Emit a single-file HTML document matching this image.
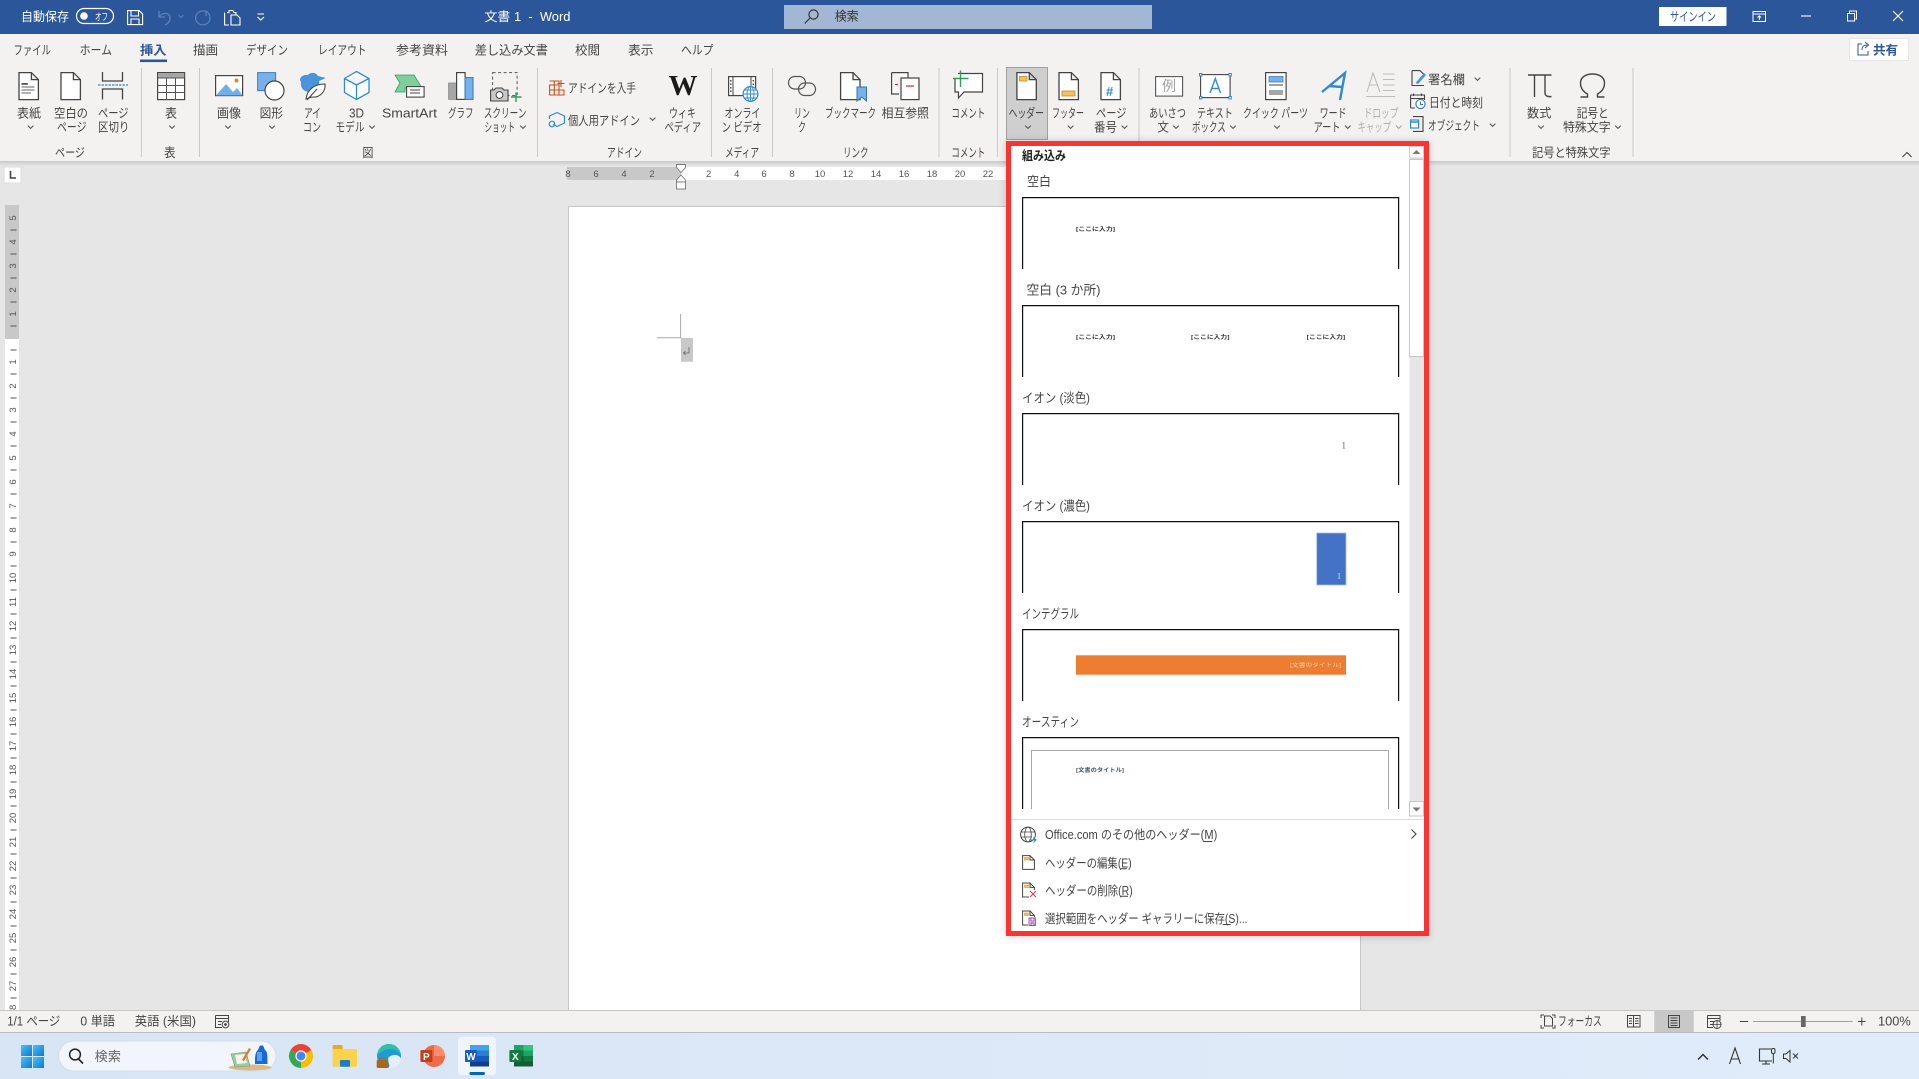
<!DOCTYPE html>
<html lang="ja"><head><meta charset="utf-8"><title>文書 1 - Word</title>
<style>
html,body{margin:0;padding:0;width:1919px;height:1079px;overflow:hidden;background:#e6e6e6}
svg{display:block;position:absolute;left:0;top:0}
text{font-family:"Liberation Sans","Noto Sans CJK JP",sans-serif;font-size:12.5px;fill:#444;white-space:pre}
.w{fill:#fff}.g{fill:#b0b0b0}
.r text,text.r{font-size:9.5px;fill:#555}
.p text{font-size:5.5px;fill:#333;font-weight:700}
.s{fill:none;stroke:#444;stroke-width:1.3}
.c{fill:none;stroke:#555;stroke-width:1.1}
.m{font-size:13px;fill:#454545}
</style></head><body>
<svg width="1919" height="1079" viewBox="0 0 1919 1079" xmlns="http://www.w3.org/2000/svg">
<defs>
<path id="ch" d="M-2.8,-1.4 L0,1.4 L2.8,-1.4" fill="none" stroke="#555" stroke-width="1.1"/>
<path id="doc" d="M.6,.6 H13 L20,7.6 V27.6 H.6 Z M13,.6 V7.6 H20" fill="#fff" stroke="#444" stroke-width="1.3"/>
<linearGradient id="tb" x1="0" x2="1" y1="0" y2="0"><stop offset="0" stop-color="#d7e5f5"/><stop offset=".3" stop-color="#dbe7f7"/><stop offset="1" stop-color="#e0ecfa"/></linearGradient>
<linearGradient id="sh" x1="0" x2="0" y1="0" y2="1"><stop offset="0" stop-color="#c9c9c9"/><stop offset="1" stop-color="#e6e6e6"/></linearGradient>
<linearGradient id="win" x1="0" x2="1" y1="0" y2="1"><stop offset="0" stop-color="#4cc2f4"/><stop offset="1" stop-color="#0a78d4"/></linearGradient>
<filter id="bl" x="-10%" y="-10%" width="120%" height="120%"><feGaussianBlur stdDeviation="4"/></filter>
</defs>

<!-- backgrounds -->
<rect width="1919" height="1079" fill="#e6e6e6"/>
<rect width="1919" height="34" fill="#2b579a"/>
<rect y="34" width="1919" height="127" fill="#f3f2f1"/>
<rect y="161" width="1919" height="5" fill="url(#sh)"/>

<!-- title bar -->
<text class="w" x="21" y="21" textLength="48" lengthAdjust="spacingAndGlyphs">自動保存</text>
<rect x="76.5" y="8.5" width="37" height="15" rx="7.5" fill="none" stroke="#fff" stroke-width="1.2"/>
<circle cx="84" cy="16" r="3.8" fill="#fff"/>
<text class="w" x="95" y="20.5" style="font-size:10px" textLength="13" lengthAdjust="spacingAndGlyphs">オフ</text>
<path d="M127.6,10.6 H139 L142.6,14 V24.6 H127.6 Z M131,10.6 V16 H138.5 V10.6 M131,24.6 V19 H139 V24.6" fill="none" stroke="#fff" stroke-width="1.1"/>
<path d="M159,11 V17 H165 M159,17 C163,11 171,13 170,19 C169.5,22 167,24 165,25" fill="none" stroke="#5f80b5" stroke-width="1.3"/>
<path d="M178.5,15 L181,17.5 L183.5,15" fill="none" stroke="#5f80b5" stroke-width="1"/>
<path d="M202,11 C196,12 194,18 197,22 C201,27 210,25 210,18 C210,15 208,12 206,11 M206,11 V16 M206,11 H201" fill="none" stroke="#5f80b5" stroke-width="1.3"/>
<path d="M227,12.6 H229 V10.5 H233 L234,12.6 H236 V15 M224.6,12.6 V25 H229 M231,15 V25 H240 V18 L237,15 Z" fill="none" stroke="#fff" stroke-width="1.1"/>
<path d="M257.5,14 H264 M257.5,17 L260.7,20 L264,17" fill="none" stroke="#fff" stroke-width="1.1"/>
<text class="w" x="484.5" y="21" textLength="86" lengthAdjust="spacingAndGlyphs">文書 1  -  Word</text>
<rect x="784" y="5" width="368" height="24" fill="#a3b7d4"/>
<circle cx="813.5" cy="14.5" r="4.6" fill="none" stroke="#333" stroke-width="1.2"/><path d="M810,18 L804.8,23.5" stroke="#333" stroke-width="1.2"/>
<text x="834.7" y="20.5" style="fill:#333" textLength="24" lengthAdjust="spacingAndGlyphs">検索</text>
<rect x="1659" y="7" width="67.5" height="19" fill="#fff"/>
<text x="1670" y="21" style="fill:#2b579a" textLength="46" lengthAdjust="spacingAndGlyphs">サインイン</text>
<path d="M1753,11.5 H1765.5 V21.5 H1753 Z M1753,14 H1765.5 M1759.3,20 V16 M1757.5,17.5 L1759.3,15.8 L1761,17.5" fill="none" stroke="#fff" stroke-width="1"/>
<path d="M1801,16 H1811" stroke="#fff" stroke-width="1.1"/>
<path d="M1847.5,13.5 H1854.5 V21 H1847.5 Z M1849.5,13 V11 H1856.5 V19 H1855" fill="none" stroke="#fff" stroke-width="1"/>
<path d="M1893,11 L1903,21 M1903,11 L1893,21" stroke="#fff" stroke-width="1.1"/>

<!-- tabs -->
<text x="13.5" y="54.3" textLength="37.5" lengthAdjust="spacingAndGlyphs">ファイル</text>
<text x="79.6" y="54.3" textLength="32.5" lengthAdjust="spacingAndGlyphs">ホーム</text>
<text x="140" y="54.3" style="fill:#2b579a;font-weight:700" textLength="26.5" lengthAdjust="spacingAndGlyphs">挿入</text>
<rect x="140" y="59.5" width="27" height="2.6" fill="#2b579a"/>
<text x="193" y="54.3" textLength="25" lengthAdjust="spacingAndGlyphs">描画</text>
<text x="246" y="54.3" textLength="42" lengthAdjust="spacingAndGlyphs">デザイン</text>
<text x="318" y="54.3" textLength="48.5" lengthAdjust="spacingAndGlyphs">レイアウト</text>
<text x="396" y="54.3" textLength="52" lengthAdjust="spacingAndGlyphs">参考資料</text>
<text x="474.7" y="54.3" textLength="73.3" lengthAdjust="spacingAndGlyphs">差し込み文書</text>
<text x="575" y="54.3" textLength="25" lengthAdjust="spacingAndGlyphs">校閲</text>
<text x="628" y="54.3" textLength="25.5" lengthAdjust="spacingAndGlyphs">表示</text>
<text x="681" y="54.3" textLength="32.5" lengthAdjust="spacingAndGlyphs">ヘルプ</text>
<rect x="1849.5" y="38.5" width="59" height="22" rx="1" fill="#fff" stroke="#e5e5e5"/>
<path d="M1862,44 H1858 V55 H1868 V51 M1862,50 C1862,46 1864,45 1867,45 M1865,42 L1868.5,45 L1865,48" fill="none" stroke="#2b579a" stroke-width="1"/>
<text x="1873" y="54.5" style="fill:#2b579a;font-weight:700;font-size:12.5px" textLength="25" lengthAdjust="spacingAndGlyphs">共有</text>

<!-- separators -->
<path d="M141.5,68 V157 M199.5,68 V157 M537.5,68 V157 M711.5,68 V157 M772.5,68 V157 M939,68 V157 M997.5,68 V157 M1139,68 V157 M1510,68 V157 M1633,68 V157" stroke="#c8c8c8" stroke-width="1"/>

<!-- ribbon: page group -->
<use href="#doc" x="18.4" y="72"/>
<path d="M21.5,84 H28 M21.5,87 H34.5 M21.5,90 H34.5 M21.5,93 H31" stroke="#666" stroke-width="1"/>
<rect x="21.5" y="83" width="6" height="1.8" fill="#555"/>
<use href="#doc" x="60.4" y="72"/>
<path d="M102.5,72 V81 H122.5 V72 M102.5,99.5 V89 H122.5 V99.5" fill="none" stroke="#444" stroke-width="1.3"/>
<path d="M98,85 H128" stroke="#2e8bd1" stroke-width="1.2" stroke-dasharray="2.5 1"/>
<text x="17" y="117.5" textLength="24" lengthAdjust="spacingAndGlyphs">表紙</text><use href="#ch" x="30.6" y="127"/>
<text x="54" y="117.5" textLength="34" lengthAdjust="spacingAndGlyphs">空白の</text>
<text x="57" y="131.5" textLength="29.5" lengthAdjust="spacingAndGlyphs">ページ</text>
<text x="98" y="117.5" textLength="30.5" lengthAdjust="spacingAndGlyphs">ページ</text>
<text x="98" y="131.5" textLength="31.4" lengthAdjust="spacingAndGlyphs">区切り</text>
<text x="55" y="157" textLength="30" lengthAdjust="spacingAndGlyphs">ページ</text>
<!-- table -->
<rect x="157.6" y="72.6" width="27" height="27" fill="#fff" stroke="#444" stroke-width="1.2"/>
<rect x="158" y="73" width="26.2" height="5" fill="#a6a6a6"/>
<path d="M157.6,78 H184.6 M157.6,85.5 H184.6 M157.6,92.5 H184.6 M166.5,78 V99.6 M175.5,78 V99.6" stroke="#555" stroke-width="1" fill="none"/>
<text x="165" y="117.5" textLength="12" lengthAdjust="spacingAndGlyphs">表</text><use href="#ch" x="172" y="127"/>
<text x="164" y="157" textLength="11.5" lengthAdjust="spacingAndGlyphs">表</text>
<!-- pictures -->
<rect x="215.6" y="75.6" width="27" height="20" fill="#fff" stroke="#444" stroke-width="1.2"/>
<path d="M216,95.5 L226,84 L233,92 L237,88 L242.5,95.5 Z" fill="#6db0ea"/>
<circle cx="236.5" cy="80.5" r="2" fill="#d58a32"/>
<rect x="257.6" y="72.6" width="18" height="18" fill="#78b1ea" stroke="#3e7cc0" stroke-width="1"/>
<circle cx="274.5" cy="90.5" r="9.5" fill="#fff" stroke="#444" stroke-width="1.2"/>
<path d="M301,82 C298,78 303,74 308,75 C310,72 316,72 318,76 L326,78 L319,81 C320,85 318,88 314,89 L310,92 C304,92 300,88 301,82 Z" fill="#4a94dc"/>
<path d="M306,99 C307,90 314,84 325,84 C326,92 319,98 312,97 Z M307,100 L317,89" fill="#fff" stroke="#444" stroke-width="1.1"/>
<path d="M356.5,71.5 L369,78.5 V92.5 L356.5,99.5 L344.5,92.5 V78.5 Z M344.5,78.5 L356.5,85 L369,78.5 M356.5,85 V99.5" fill="#fff" stroke="#2e8bd1" stroke-width="1.3"/>
<path d="M395,75 H414 L422,88 H405 V92 H395 L400,83 Z" fill="#7fd09c" stroke="#2f9e58" stroke-width=".8"/>
<rect x="406.6" y="86.6" width="17.5" height="10.5" fill="#fff" stroke="#444" stroke-width="1.1"/>
<path d="M410,90 H420 M410,93 H420" stroke="#444" stroke-width=".9"/>
<rect x="448.6" y="83" width="8" height="16.4" fill="#a6a6a6" stroke="#8a8a8a" stroke-width=".8"/>
<rect x="456.6" y="72.6" width="8.5" height="26.8" fill="#fff" stroke="#444" stroke-width="1.2"/>
<rect x="465" y="77.6" width="8" height="21.8" fill="#78b1ea" stroke="#2e75b6" stroke-width="1"/>
<rect x="492.6" y="72.6" width="24.5" height="23" fill="none" stroke="#555" stroke-width="1" stroke-dasharray="3 2.5"/>
<path d="M490.6,90 H494 L496,88 H502 L504,90 H508 V101 H490.6 Z" fill="#c9c9c9" stroke="#444" stroke-width="1.1"/>
<circle cx="499.5" cy="95" r="3.4" fill="#fff" stroke="#444"/>
<path d="M516,92.5 V102 M511,97 H521.5" stroke="#2f9e58" stroke-width="1.4"/>
<text x="217" y="117.5" textLength="24" lengthAdjust="spacingAndGlyphs">画像</text><use href="#ch" x="228" y="127"/>
<text x="259.6" y="117.5" textLength="23.4" lengthAdjust="spacingAndGlyphs">図形</text><use href="#ch" x="272" y="127"/>
<text x="304" y="117.5" textLength="17" lengthAdjust="spacingAndGlyphs">アイ</text>
<text x="303" y="131.5" textLength="18" lengthAdjust="spacingAndGlyphs">コン</text>
<text x="349" y="117.5" textLength="15" lengthAdjust="spacingAndGlyphs">3D</text>
<text x="335.5" y="131.5" textLength="29" lengthAdjust="spacingAndGlyphs">モデル</text><use href="#ch" x="372" y="127"/>
<text x="382" y="117.5" textLength="55" lengthAdjust="spacingAndGlyphs">SmartArt</text>
<text x="448" y="117.5" textLength="25.5" lengthAdjust="spacingAndGlyphs">グラフ</text>
<text x="483.7" y="117.5" textLength="42.8" lengthAdjust="spacingAndGlyphs">スクリーン</text>
<text x="484.5" y="131.5" textLength="30.5" lengthAdjust="spacingAndGlyphs">ショット</text><use href="#ch" x="523" y="127"/>
<text x="362.4" y="157" textLength="11.1" lengthAdjust="spacingAndGlyphs">図</text>
<!-- add-ins -->
<path d="M549.6,85 H559 V95 H549.6 Z M549.6,90 H564 V95 H559 M554.3,81 V95 M549.6,81 H559 V85 M561,80 V87 M557.5,83.5 H564.5" fill="none" stroke="#c8501f" stroke-width="1.1"/>
<path d="M557,112.5 L564.5,116 V123 L557,126.5 L553,124.5 M549.5,119 V116 L557,112.5" fill="none" stroke="#2e8bd1" stroke-width="1.2"/><circle cx="552" cy="124" r="2.8" fill="none" stroke="#2e8bd1" stroke-width="1.2"/>
<text x="568" y="92.5" textLength="68" lengthAdjust="spacingAndGlyphs">アドインを入手</text>
<text x="568" y="125" textLength="72" lengthAdjust="spacingAndGlyphs">個人用アドイン</text><use href="#ch" x="652.6" y="119"/>
<text x="607" y="157" textLength="35" lengthAdjust="spacingAndGlyphs">アドイン</text>
<text x="668.5" y="95" style="font-family:'Liberation Serif',serif;font-size:28px;font-weight:700;fill:#1a1a1a" textLength="29" lengthAdjust="spacingAndGlyphs">W</text>
<text x="669" y="117.5" textLength="27" lengthAdjust="spacingAndGlyphs">ウィキ</text>
<text x="664.5" y="131.5" textLength="36.5" lengthAdjust="spacingAndGlyphs">ペディア</text>
<!-- media -->
<rect x="728.6" y="76.6" width="27" height="19" fill="#fff" stroke="#444" stroke-width="1.2"/>
<path d="M733,76.6 V95.6 M751,76.6 V95.6" stroke="#444"/>
<path d="M730.8,80 V94 M753.3,80 V88" stroke="#444" stroke-width="1.4" stroke-dasharray="1.5 2"/>
<circle cx="750.5" cy="94" r="7.4" fill="#fff" stroke="#2e8bd1" stroke-width="1.2"/>
<path d="M743,94 H758 M750.5,86.6 V101.4 M744.5,90 H756.5 M744.5,98 H756.5" stroke="#2e8bd1" stroke-width=".9" fill="none"/><ellipse cx="750.5" cy="94" rx="3.5" ry="7.4" fill="none" stroke="#2e8bd1" stroke-width=".9"/>
<text x="724.5" y="117.5" textLength="35.9" lengthAdjust="spacingAndGlyphs">オンライ</text>
<text x="721.6" y="131.5" textLength="40" lengthAdjust="spacingAndGlyphs">ン ビデオ</text>
<text x="725" y="157" textLength="34" lengthAdjust="spacingAndGlyphs">メディア</text>
<!-- links -->
<rect x="788.5" y="76.5" width="17" height="12.5" rx="6.2" fill="none" stroke="#555" stroke-width="1.2"/>
<rect x="798.5" y="83" width="17" height="12.5" rx="6.2" fill="none" stroke="#555" stroke-width="1.2"/>
<use href="#doc" x="840" y="72"/>
<path d="M857,87 H866.5 V101 L861.7,97 L857,101 Z" fill="#78b1ea" stroke="#2e75b6"/>
<path d="M891.6,72.6 H908 V78 M891.6,72.6 V94 H899" fill="#fff" stroke="#444" stroke-width="1.2"/>
<rect x="901" y="78" width="18" height="21.6" fill="#fff" stroke="#444" stroke-width="1.2"/>
<path d="M895,84.5 H898 M906,86 H914" stroke="#d13438" stroke-width="1.2"/>
<text x="794" y="117.5" textLength="16" lengthAdjust="spacingAndGlyphs">リン</text>
<text x="798" y="131.5" textLength="8" lengthAdjust="spacingAndGlyphs">ク</text>
<text x="825" y="117.5" textLength="51" lengthAdjust="spacingAndGlyphs">ブックマーク</text>
<text x="881.6" y="117.5" textLength="47.4" lengthAdjust="spacingAndGlyphs">相互参照</text>
<text x="843" y="157" textLength="25.6" lengthAdjust="spacingAndGlyphs">リンク</text>
<!-- comment -->
<path d="M958,73.5 H982.5 V92 H964 L958.5,98 V92 H955 V79" fill="#fff" stroke="#444" stroke-width="1.2"/>
<path d="M960.5,70.5 V87 M953,78.5 H968.5" stroke="#2f9e58" stroke-width="1.4"/>
<text x="951.4" y="117.5" textLength="33.9" lengthAdjust="spacingAndGlyphs">コメント</text>
<text x="951.4" y="157" textLength="33.9" lengthAdjust="spacingAndGlyphs">コメント</text>
<!-- header/footer -->
<rect x="1006.5" y="67.5" width="41" height="72" fill="#cfcfcf" stroke="#a0a0a0"/>
<use href="#doc" x="1016.3" y="72"/>
<rect x="1019.5" y="76.5" width="7.5" height="4.5" fill="#f6c05c" stroke="#c98a1c" stroke-width=".8"/>
<use href="#doc" x="1058.4" y="72"/>
<rect x="1062" y="91" width="13" height="5" fill="#f6c05c" stroke="#c98a1c" stroke-width=".8"/>
<use href="#doc" x="1100.4" y="72"/>
<text x="1106" y="96" style="font-size:13px;fill:#2e8bd1;font-weight:700">#</text>
<text x="1008.6" y="117.5" textLength="35.4" lengthAdjust="spacingAndGlyphs">ヘッダー</text><use href="#ch" x="1028" y="127"/>
<text x="1052" y="117.5" textLength="32" lengthAdjust="spacingAndGlyphs">フッター</text><use href="#ch" x="1070.6" y="127"/>
<text x="1096" y="117.5" textLength="30.5" lengthAdjust="spacingAndGlyphs">ページ</text>
<text x="1094" y="131.5" textLength="23" lengthAdjust="spacingAndGlyphs">番号</text><use href="#ch" x="1124.5" y="127"/>
<!-- text group -->
<rect x="1155.6" y="76.6" width="27" height="19.5" fill="#fff" stroke="#555" stroke-width="1.1"/>
<text x="1162" y="91" style="font-size:14px;fill:#a0a0a0">例</text>
<rect x="1200.6" y="74.6" width="29.5" height="23" fill="#fff" stroke="#444" stroke-width="1.1"/>
<path d="M1199.5,73.5 h2.4 v2.4 h-2.4 Z M1228.9,73.5 h2.4 v2.4 h-2.4 Z M1199.5,96.5 h2.4 v2.4 h-2.4 Z M1228.9,96.5 h2.4 v2.4 h-2.4 Z" fill="#fff" stroke="#2e8bd1"/>
<path d="M1210,93 L1215.3,78.5 L1220.5,93 M1212,88.5 H1218.5" fill="none" stroke="#2e8bd1" stroke-width="1.4"/>
<rect x="1265.6" y="72.6" width="20.5" height="27" fill="#fff" stroke="#444" stroke-width="1.2"/>
<rect x="1269" y="76.5" width="14" height="5.5" fill="#78b1ea" stroke="#2e75b6" stroke-width=".7"/>
<path d="M1269,85 H1283" stroke="#444" stroke-width="1"/>
<rect x="1269" y="90" width="14" height="5" fill="#a6a6a6"/>
<path d="M1322,92 L1345,73 L1340,100 M1329,86 L1342,87" fill="none" stroke="#2e8bd1" stroke-width="2.4"/>
<path d="M1367,92 L1373,73 L1380,92 M1369.5,85 H1377.5 M1383,74 H1394.5 M1383,79.5 H1394.5 M1383,85 H1394.5 M1383,90.5 H1394.5 M1366,96.5 H1395" fill="none" stroke="#bcbcbc" stroke-width="1.1"/>
<text x="1149" y="117.5" textLength="37" lengthAdjust="spacingAndGlyphs">あいさつ</text>
<text x="1157.5" y="131.5" textLength="11.5" lengthAdjust="spacingAndGlyphs">文</text><use href="#ch" x="1176" y="127"/>
<text x="1197" y="117.5" textLength="35.7" lengthAdjust="spacingAndGlyphs">テキスト</text>
<text x="1192" y="131.5" textLength="33.7" lengthAdjust="spacingAndGlyphs">ボックス</text><use href="#ch" x="1233" y="127"/>
<text x="1243" y="117.5" textLength="65" lengthAdjust="spacingAndGlyphs">クイック パーツ</text><use href="#ch" x="1277" y="127"/>
<text x="1319.6" y="117.5" textLength="27" lengthAdjust="spacingAndGlyphs">ワード</text>
<text x="1313.5" y="131.5" textLength="27" lengthAdjust="spacingAndGlyphs">アート</text><use href="#ch" x="1347.8" y="127"/>
<text class="g" x="1363.7" y="117.5" textLength="34.7" lengthAdjust="spacingAndGlyphs">ドロップ</text>
<text class="g" x="1357.5" y="131.5" textLength="33.5" lengthAdjust="spacingAndGlyphs">キャップ</text><use href="#ch" x="1398.8" y="127" opacity=".5"/>
<path d="M1412,70.6 H1420 L1424,74.5 V77 M1412,70.6 V85.5 H1424" fill="none" stroke="#444" stroke-width="1.1"/>
<path d="M1415.5,83 L1424,73 L1426,75 L1418,84 Z" fill="#4a94dc"/>
<text x="1428" y="84" textLength="37" lengthAdjust="spacingAndGlyphs">署名欄</text><use href="#ch" x="1477.5" y="79"/>
<path d="M1410.6,108 V95 H1424.5 V100 M1410.6,98.5 H1424.5 M1413.5,93.5 V96 M1421.5,93.5 V96 M1410.6,108 H1415" fill="none" stroke="#444" stroke-width="1.1"/>
<circle cx="1420.5" cy="104" r="4.6" fill="#fff" stroke="#2e75b6" stroke-width="1.1"/><path d="M1420.5,101.5 V104.5 H1423" fill="none" stroke="#2e75b6"/>
<text x="1429" y="107" textLength="54" lengthAdjust="spacingAndGlyphs">日付と時刻</text>
<path d="M1413,116.6 H1423 V131.4 H1413" fill="none" stroke="#444" stroke-width="1.1"/>
<rect x="1410.6" y="120" width="8" height="8" fill="#fff" stroke="#2e8bd1" stroke-width="1.2"/><path d="M1410.6,122 H1418.6" stroke="#2e8bd1" stroke-width="1.5"/>
<text x="1428" y="130" textLength="52" lengthAdjust="spacingAndGlyphs">オブジェクト</text><use href="#ch" x="1492.6" y="125"/>
<!-- symbols -->
<path d="M1528,75 H1551.5 M1534.5,75 V97 M1545,75 V93 C1545,96 1548,97 1551.5,96.5" fill="none" stroke="#444" stroke-width="1.4"/>
<path d="M1580.5,97 H1587.5 V94 C1582,91 1580.5,87 1580.5,83 C1580.5,77 1586,74 1592.5,74 C1599,74 1604.5,77 1604.5,83 C1604.5,87 1603,91 1597.5,94 V97 H1604.5" fill="none" stroke="#444" stroke-width="1.4"/>
<text x="1527" y="117.5" textLength="24.4" lengthAdjust="spacingAndGlyphs">数式</text><use href="#ch" x="1541" y="127"/>
<text x="1576.7" y="117.5" textLength="32" lengthAdjust="spacingAndGlyphs">記号と</text>
<text x="1563" y="131.5" textLength="47.6" lengthAdjust="spacingAndGlyphs">特殊文字</text><use href="#ch" x="1618" y="127"/>
<text x="1532" y="157" textLength="78.6" lengthAdjust="spacingAndGlyphs">記号と特殊文字</text>
<path d="M1902.5,157 L1907,152.5 L1911.5,157" fill="none" stroke="#444" stroke-width="1.1"/>

<!-- ruler corner -->
<rect x="4" y="167" width="17" height="16" fill="#fff" stroke="#ddd"/>
<path d="M10.5,171 V178 H16" fill="none" stroke="#444" stroke-width="1.6"/>
<!-- horizontal ruler -->
<rect x="567" y="167" width="114" height="13" fill="#c8c8c8"/>
<rect x="681" y="167" width="329" height="13" fill="#fff"/>
<g class="r" text-anchor="middle">
<text x="568" y="177">8</text><text x="596" y="177">6</text><text x="624" y="177">4</text><text x="652" y="177">2</text>
<text x="708.7" y="177">2</text><text x="736.8" y="177">4</text><text x="764" y="177">6</text><text x="792" y="177">8</text><text x="820" y="177">10</text><text x="848" y="177">12</text><text x="876" y="177">14</text><text x="904" y="177">16</text><text x="932" y="177">18</text><text x="960" y="177">20</text><text x="988" y="177">22</text>
</g>
<path d="M676.5,164.5 H685.5 V167.5 L681,172.5 L676.5,167.5 Z M681,175 L685.5,180 V182 H676.5 V180 Z" fill="#fff" stroke="#777" stroke-width=".9"/>
<rect x="676.5" y="182" width="9" height="7" fill="#fff" stroke="#777" stroke-width=".9"/>
<!-- vertical ruler -->
<rect x="5" y="205" width="14" height="134" fill="#c8c8c8"/>
<rect x="5" y="339" width="14" height="671" fill="#fff"/>
<path d="M10.5,230 h6 M10.5,254 h6 M10.5,278 h6 M10.5,302 h6 M10.5,326 h6 M10.5,350 h6 M10.5,374 h6 M10.5,398 h6 M10.5,422 h6 M10.5,446 h6 M10.5,470 h6 M10.5,494 h6 M10.5,518 h6 M10.5,542 h6 M10.5,566 h6 M10.5,590 h6 M10.5,614 h6 M10.5,638 h6 M10.5,662 h6 M10.5,686 h6 M10.5,710 h6 M10.5,734 h6 M10.5,758 h6 M10.5,782 h6 M10.5,806 h6 M10.5,830 h6 M10.5,854 h6 M10.5,878 h6 M10.5,902 h6 M10.5,926 h6 M10.5,950 h6 M10.5,974 h6 M10.5,998 h6" stroke="#555" stroke-width="1"/>
<g class="r" text-anchor="middle">
<text transform="translate(16,218) rotate(-90)">5</text><text transform="translate(16,242) rotate(-90)">4</text><text transform="translate(16,266) rotate(-90)">3</text><text transform="translate(16,290) rotate(-90)">2</text><text transform="translate(16,314) rotate(-90)">1</text>
<text transform="translate(16,362) rotate(-90)">1</text><text transform="translate(16,386) rotate(-90)">2</text><text transform="translate(16,410) rotate(-90)">3</text><text transform="translate(16,434) rotate(-90)">4</text><text transform="translate(16,458) rotate(-90)">5</text><text transform="translate(16,482) rotate(-90)">6</text><text transform="translate(16,506) rotate(-90)">7</text><text transform="translate(16,530) rotate(-90)">8</text><text transform="translate(16,554) rotate(-90)">9</text><text transform="translate(16,578) rotate(-90)">10</text><text transform="translate(16,602) rotate(-90)">11</text><text transform="translate(16,626) rotate(-90)">12</text><text transform="translate(16,650) rotate(-90)">13</text><text transform="translate(16,674) rotate(-90)">14</text><text transform="translate(16,698) rotate(-90)">15</text><text transform="translate(16,722) rotate(-90)">16</text><text transform="translate(16,746) rotate(-90)">17</text><text transform="translate(16,770) rotate(-90)">18</text><text transform="translate(16,794) rotate(-90)">19</text><text transform="translate(16,818) rotate(-90)">20</text><text transform="translate(16,842) rotate(-90)">21</text><text transform="translate(16,866) rotate(-90)">22</text><text transform="translate(16,890) rotate(-90)">23</text><text transform="translate(16,914) rotate(-90)">24</text><text transform="translate(16,938) rotate(-90)">25</text><text transform="translate(16,962) rotate(-90)">26</text><text transform="translate(16,986) rotate(-90)">27</text><text transform="translate(16,1010) rotate(-90)">28</text>
</g>
<!-- page -->
<rect x="568.5" y="206.5" width="792" height="820" fill="#fff" stroke="#c6c6c6"/>
<path d="M680.6,314 V337.7 H656.8" fill="none" stroke="#aaa" stroke-width="1"/>
<rect x="681" y="338" width="12" height="23.7" fill="#c8c8c8"/>
<path d="M689,347 V353 H683.5 M685.5,351 L683.5,353 L685.5,355" fill="none" stroke="#666" stroke-width=".8"/>

<!-- status bar -->
<rect y="1010" width="1919" height="22" fill="#f3f2f1"/>
<path d="M0,1010.5 H1919" stroke="#c6c6c6"/>
<text x="7.3" y="1025.3" textLength="53" lengthAdjust="spacingAndGlyphs">1/1 ページ</text>
<text x="80.4" y="1025.3" textLength="34.6" lengthAdjust="spacingAndGlyphs">0 単語</text>
<text x="134.7" y="1025.3" textLength="61.3" lengthAdjust="spacingAndGlyphs">英語 (米国)</text>
<path d="M215.5,1015.5 H228.5 V1022 M215.5,1018.5 H228.5 M215.5,1015.5 V1027.5 H222 M218,1021.5 H222 M218,1024.5 H221" fill="none" stroke="#444" stroke-width="1"/><circle cx="225.5" cy="1024.5" r="3.4" fill="none" stroke="#444"/><circle cx="225.5" cy="1024.5" r="1.4" fill="#444"/>
<path d="M1541,1018 V1015 H1544 M1552,1015 H1555 V1018 M1541,1025 V1028 H1544 M1552,1028 H1555 V1025 M1544.5,1026 V1016 H1550 L1552.5,1018.5 V1026 Z" fill="none" stroke="#444" stroke-width="1"/>
<text x="1558" y="1025.3" textLength="43.7" lengthAdjust="spacingAndGlyphs">フォーカス</text>
<path d="M1627.5,1015.5 H1633.5 V1027 H1627.5 Z M1633.5,1015.5 H1640 V1027 H1633.5 M1629,1018.5 H1632 M1629,1021 H1632 M1629,1023.5 H1632 M1635,1018.5 H1638.5 M1635,1021 H1638.5 M1635,1023.5 H1638.5" fill="none" stroke="#444" stroke-width="1"/>
<rect x="1654.3" y="1011" width="39.4" height="21" fill="#c8c8c8"/>
<path d="M1668.5,1015.5 H1679.5 V1027.5 H1668.5 Z M1670.5,1018 H1677.5 M1670.5,1020.5 H1677.5 M1670.5,1023 H1677.5 M1670.5,1025.5 H1677.5" fill="none" stroke="#444" stroke-width="1"/>
<path d="M1707.5,1015.5 H1720 V1021 M1707.5,1018.5 H1720 M1707.5,1015.5 V1027.5 H1713 M1710,1021.5 H1714 M1710,1024.5 H1713" fill="none" stroke="#444" stroke-width="1"/><circle cx="1717" cy="1024.5" r="4" fill="#f3f2f1" stroke="#444"/><path d="M1713,1024.5 H1721 M1717,1020.5 V1028.5" stroke="#444" stroke-width=".8"/>
<path d="M1740,1021.5 H1748 M1858,1021.5 H1865.7 M1861.8,1017.5 V1025.5" stroke="#444" stroke-width="1"/>
<path d="M1753,1021.5 H1852.7" stroke="#a0a0a0" stroke-width="1"/>
<rect x="1801" y="1016" width="4.7" height="11" fill="#666"/>
<text x="1878" y="1025.3" textLength="32.7" lengthAdjust="spacingAndGlyphs">100%</text>

<!-- taskbar -->
<rect y="1032" width="1919" height="47" fill="url(#tb)"/>
<path d="M0,1032.5 H1919" stroke="#b8bdc4"/>
<rect x="21" y="1045" width="11" height="11" fill="url(#win)"/><rect x="33" y="1045" width="11" height="11" fill="url(#win)"/><rect x="21" y="1057" width="11" height="11" fill="url(#win)"/><rect x="33" y="1057" width="11" height="11" fill="url(#win)"/>
<rect x="58.5" y="1041" width="217.5" height="30" rx="15" fill="#f2f6fc" stroke="#d4dde8"/>
<circle cx="75" cy="1054.5" r="5.4" fill="none" stroke="#222" stroke-width="1.5"/><path d="M78.5,1059 L83,1063.5" stroke="#222" stroke-width="1.6"/>
<text x="94.7" y="1061" style="font-size:13px;fill:#666" textLength="26.3" lengthAdjust="spacingAndGlyphs">検索</text>
<ellipse cx="250" cy="1067.5" rx="21.5" ry="3" fill="#d9b98a"/>
<path d="M231,1054 L246,1052 L250,1066 L235,1067 Z" fill="#9cc9a0" stroke="#7a9b76" stroke-width=".6"/>
<path d="M235,1055 L245,1054 L247,1063 L237,1064 Z" fill="#f5f5ee"/>
<path d="M242,1060 L249,1048 L251,1049 L244,1061 Z" fill="#e8732c"/>
<path d="M258,1050 L260,1045.5 H263 L265,1050 C267.5,1052 267.5,1055 267.5,1064 H255 C255,1055 255.5,1052 258,1050 Z" fill="#1768d8"/>
<rect x="257" y="1052" width="5" height="9" fill="#5aa2f0"/>
<path d="M301,1056 L290.6,1050 A12,12 0 0 1 311.4,1050 Z" fill="#ea4335"/>
<path d="M301,1056 L311.4,1050 A12,12 0 0 1 301,1068 Z" fill="#fbbc05"/>
<path d="M301,1056 L301,1068 A12,12 0 0 1 290.6,1050 Z" fill="#34a853"/>
<circle cx="301" cy="1056" r="5.6" fill="#fff"/><circle cx="301" cy="1056" r="4.4" fill="#4285f4"/>
<rect x="332.6" y="1045" width="10" height="6" rx="1" fill="#e5ab22"/>
<rect x="332.6" y="1049" width="24.4" height="17.7" rx="1" fill="#fbd24b"/>
<rect x="340" y="1060" width="10" height="6.7" rx="1" fill="#1a7fc9"/>
<circle cx="389" cy="1056" r="12" fill="#1f9bd6"/>
<path d="M377,1056 A12,12 0 0 1 401,1056 C399,1050 392,1047 385,1050 C381,1052 378,1053 377,1056 Z" fill="#2fc2a6"/>
<path d="M389,1057 C394,1053 400,1055 401,1059 C400,1066 393,1069 388,1068 C392,1066 386,1061 389,1057 Z" fill="#e6eefa"/>
<rect x="376.7" y="1060" width="11.5" height="8" rx="1" fill="#a9661c"/><path d="M380,1060 V1058 H385 V1060" fill="none" stroke="#a9661c"/>
<circle cx="434" cy="1056" r="11" fill="#ed6c47"/><path d="M434,1045 A11,11 0 0 1 445,1056 H434 Z" fill="#ff8f6b"/>
<rect x="420.4" y="1050" width="12" height="12" rx="1" fill="#c43e1c"/>
<text x="423" y="1060" style="font-size:10px;font-weight:700;fill:#fff">P</text>
<rect x="458" y="1036.7" width="38" height="38.3" rx="3" fill="#f3f7fd" opacity=".85"/>
<rect x="469.4" y="1072" width="15.6" height="3" rx="1.5" fill="#0067c0"/>
<rect x="470" y="1045" width="19" height="5.5" fill="#41a5ee"/><rect x="470" y="1050.5" width="19" height="5.5" fill="#2b7cd3"/><rect x="470" y="1056" width="19" height="5.5" fill="#185abd"/><rect x="470" y="1061.5" width="19" height="5" fill="#103f91"/>
<rect x="465" y="1050" width="12" height="12" rx="1" fill="#185abd"/>
<text x="466.3" y="1060" style="font-size:10px;font-weight:700;fill:#fff">W</text>
<rect x="514" y="1045" width="9.5" height="5.5" fill="#21a366"/><rect x="523.5" y="1045" width="9.5" height="5.5" fill="#33c481"/><rect x="514" y="1050.5" width="9.5" height="5.5" fill="#107c41"/><rect x="523.5" y="1050.5" width="9.5" height="5.5" fill="#21a366"/><rect x="514" y="1056" width="9.5" height="5.5" fill="#185c37"/><rect x="523.5" y="1056" width="9.5" height="5.5" fill="#107c41"/><rect x="514" y="1061.5" width="19" height="5" fill="#185c37"/>
<rect x="509.4" y="1050" width="12" height="12" rx="1" fill="#107c41"/>
<text x="512" y="1060" style="font-size:10px;font-weight:700;fill:#fff">X</text>
<path d="M1698,1059.5 L1703,1054.5 L1708,1059.5" fill="none" stroke="#333" stroke-width="1.5"/>
<path d="M1729.5,1064 L1735,1048 L1740.5,1064 M1731.5,1059 H1738.5" fill="none" stroke="#333" stroke-width="1.1"/>
<path d="M1771,1049 H1759.5 V1061 H1772 M1762,1064 H1770 M1766,1061 V1064" fill="none" stroke="#333" stroke-width="1.1"/><rect x="1771.5" y="1048.5" width="3.5" height="5" rx="1.5" fill="none" stroke="#333"/><path d="M1773.3,1054 V1063.5" stroke="#333"/>
<path d="M1783.5,1054 H1786 L1790,1050.5 V1062 L1786,1058.5 H1783.5 Z M1793,1053.5 L1798,1058.5 M1798,1053.5 L1793,1058.5" fill="none" stroke="#333" stroke-width="1"/>

<!-- gallery menu -->
<rect x="1006" y="141" width="423" height="796" fill="#000" opacity=".18" filter="url(#bl)"/>
<rect x="1008.5" y="143.5" width="418" height="790" fill="#fff" stroke="#fb3333" stroke-width="5"/>
<rect x="1409.5" y="146" width="14.5" height="655" fill="#e6e6e6"/>
<rect x="1409.5" y="146.5" width="14" height="11.5" fill="#fff" stroke="#c6c6c6" stroke-width=".8"/>
<path d="M1412.5,154 L1416.5,150 L1420.5,154 Z" fill="#777"/>
<rect x="1409.5" y="159.5" width="14" height="197" fill="#fff" stroke="#c6c6c6"/>
<rect x="1409.5" y="801.5" width="14" height="14.5" fill="#fff" stroke="#c6c6c6"/>
<path d="M1412.5,807.5 L1416.5,811.5 L1420.5,807.5 Z" fill="#777"/>
<text x="1022" y="160" style="font-weight:700;fill:#222" textLength="44" lengthAdjust="spacingAndGlyphs">組み込み</text>
<text class="m" x="1027" y="186" textLength="24" lengthAdjust="spacingAndGlyphs">空白</text>
<text class="m" x="1026.5" y="294.3" textLength="74" lengthAdjust="spacingAndGlyphs">空白 (3 か所)</text>
<text class="m" x="1022" y="402.5" textLength="68" lengthAdjust="spacingAndGlyphs">イオン (淡色)</text>
<text class="m" x="1022" y="510.5" textLength="68" lengthAdjust="spacingAndGlyphs">イオン (濃色)</text>
<text class="m" x="1022" y="618.5" textLength="57" lengthAdjust="spacingAndGlyphs">インテグラル</text>
<text class="m" x="1022" y="726.5" textLength="57" lengthAdjust="spacingAndGlyphs">オースティン</text>
<g fill="none" stroke="#111" stroke-width="1.2">
<path d="M1022.6,269 V197.6 H1398.6 V269"/>
<path d="M1022.6,377 V305.6 H1398.6 V377"/>
<path d="M1022.6,485 V413.6 H1398.6 V485"/>
<path d="M1022.6,593 V521.6 H1398.6 V593"/>
<path d="M1022.6,701 V629.6 H1398.6 V701"/>
<path d="M1022.6,809 V737.6 H1398.6 V809"/>
</g>
<g class="p">
<text x="1076" y="231" textLength="39" lengthAdjust="spacingAndGlyphs">[ここに入力]</text>
<text x="1076" y="339" textLength="39" lengthAdjust="spacingAndGlyphs">[ここに入力]</text>
<text x="1191" y="339" textLength="38.5" lengthAdjust="spacingAndGlyphs">[ここに入力]</text>
<text x="1306.7" y="339" textLength="38.5" lengthAdjust="spacingAndGlyphs">[ここに入力]</text>
<text x="1341.5" y="448.5" style="font-family:'Liberation Serif',serif;font-size:9px;font-weight:400;fill:#666">1</text>
<text x="1076" y="772" style="fill:#44546a" textLength="48" lengthAdjust="spacingAndGlyphs">[文書のタイトル]</text>
</g>
<rect x="1316.7" y="533" width="29.3" height="52" fill="#4472c4" stroke="#a9bfe6" stroke-width=".8"/>
<text x="1337" y="578.5" style="font-family:'Liberation Serif',serif;font-size:8px;fill:#dbe4f5">1</text>
<rect x="1076" y="655.3" width="270" height="19.4" fill="#ed7d31"/>
<text x="1290" y="667" style="font-size:5.5px;fill:#f9d0b4" textLength="51" lengthAdjust="spacingAndGlyphs">[文書のタイトル]</text>
<path d="M1031.5,809 V750.5 H1388.5 V809" fill="none" stroke="#a9a9a9" stroke-width="1"/>
<!-- menu items -->
<path d="M1011,819.5 H1424" stroke="#dcdcdc"/>
<circle cx="1028" cy="834.5" r="7.4" fill="none" stroke="#444"/><ellipse cx="1028" cy="834.5" rx="3.3" ry="7.4" fill="none" stroke="#444" stroke-width=".8"/><path d="M1021,832 H1035 M1021,837 H1032" stroke="#444" stroke-width=".8"/>
<path d="M1029,840 H1036 M1033.5,837.5 L1036,840 L1033.5,842.5" fill="none" stroke="#2e8bd1" stroke-width="1"/>
<text x="1045" y="839" textLength="172.3" lengthAdjust="spacingAndGlyphs">Office.com のその他のヘッダー(M)</text>
<path d="M1203.3,841.5 H1212.3 M1120,868.8 H1127 M1120,896.2 H1128 M1222.7,924.5 H1230.7" stroke="#444"/>
<path d="M1411.5,829.5 L1416,834 L1411.5,838.5" fill="none" stroke="#444" stroke-width="1.1"/>
<path d="M1022.6,855.6 H1030 L1034.4,860 V869.4 H1022.6 Z M1030,855.6 V860 H1034.4" fill="#fff" stroke="#444"/><rect x="1024.5" y="857.5" width="4" height="2.5" fill="#f6c05c" stroke="#c98a1c" stroke-width=".5"/>
<text x="1045" y="867.5" textLength="86.7" lengthAdjust="spacingAndGlyphs">ヘッダーの編集(E)</text>
<path d="M1029,897 H1022.6 V883 H1030 L1034.4,887.4 V890 M1030,883 V887.4 H1034.4" fill="#fff" stroke="#444"/><rect x="1024.5" y="885" width="4" height="2.5" fill="#f6c05c" stroke="#c98a1c" stroke-width=".5"/>
<path d="M1030,891 L1036,897 M1036,891 L1030,897" stroke="#e0344c" stroke-width="1"/>
<text x="1045" y="895" textLength="87.7" lengthAdjust="spacingAndGlyphs">ヘッダーの削除(R)</text>
<path d="M1028,925 H1022.6 V911 H1030 L1034.4,915.4 V917 M1030,911 V915.4 H1034.4" fill="#fff" stroke="#444"/><rect x="1024.5" y="913" width="4" height="2.5" fill="#f6c05c" stroke="#c98a1c" stroke-width=".5"/>
<path d="M1029,918 H1035.5 V925.5 H1029 Z M1031,918 V921 H1034 V918 M1031,925.5 V923 H1034 V925.5" fill="#e6d4f2" stroke="#a04cb8" stroke-width=".9"/>
<text x="1045" y="923" textLength="202.5" lengthAdjust="spacingAndGlyphs">選択範囲をヘッダー ギャラリーに保存(S)...</text>
</svg>
</body></html>
